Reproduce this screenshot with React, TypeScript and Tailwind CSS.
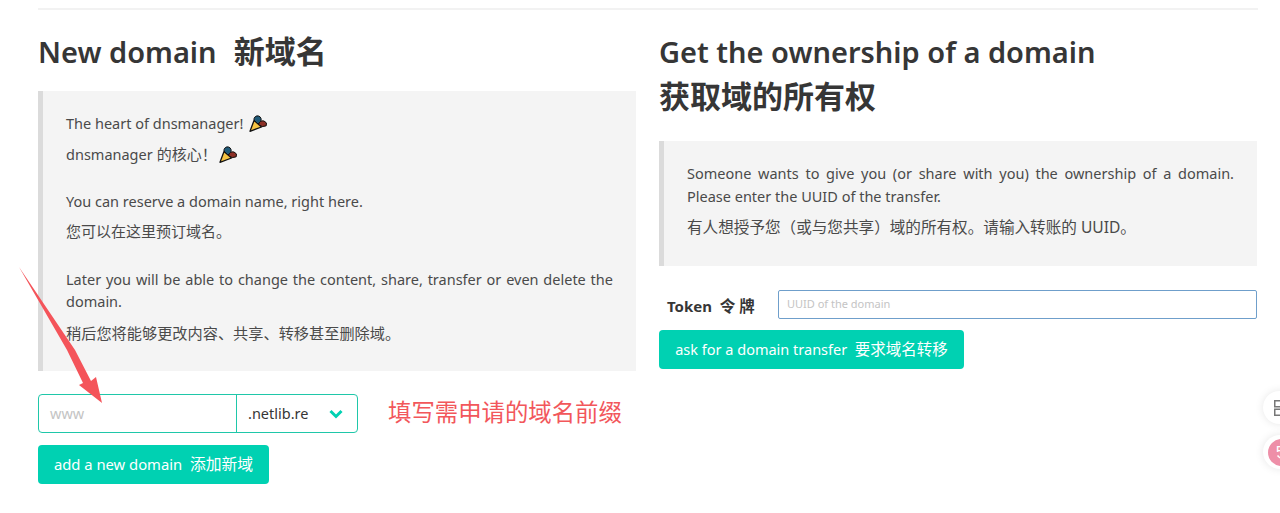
import React from 'react';

const font = { fontFamily: '"Noto Sans", "Noto Sans CJK SC", sans-serif' };

// small party popper, the emoji in the note
const Popper = ({ className }: { className?: string }) => (
  <svg viewBox="0 0 18 17" className={className} width="18" height="17">
    <path d="M1 16.3 L5 5.5 L12.5 12 Z" fill="#f6c343" stroke="#111" strokeWidth="1.3" strokeLinejoin="round" />
    <path d="M5 5 a3.6 3.6 0 1 1 6.3 1.8 L9 9 Z" fill="#1f5a78" stroke="#111" strokeWidth="1" />
    <path d="M9.5 9.5 Q11 5 15 6 Q18.8 7.5 17.2 10.8 Q13 13 9.5 9.5 Z" fill="#8c2f25" stroke="#111" strokeWidth="1" />
  </svg>
);

const Note = ({ children, className }: { children: React.ReactNode; className?: string }) => (
  <div className={`border-l-[5px] border-[#dbdbdb] bg-[#f4f4f4] text-[14.5px] leading-[22px] text-[#4a4a4a] ${className}`}>
    {children}
  </div>
);

export default function App() {
  return (
    <div className="relative h-[513px] w-[1280px] overflow-hidden bg-white pl-[38px] pr-[22px] pt-[8px]" style={font}>
      <hr className="h-[2px] border-0 bg-[#f2f2f2]" />

      <div className="mt-[20px] flex gap-[23px]">
        {/* Left column */}
        <section className="w-[598px] shrink-0">
          <h1 className="-mt-[1px] text-[29px] font-semibold leading-[44px] text-[#363636]">
            New domain&nbsp; <span className="ml-[2px] text-[31px]">新域名</span>
          </h1>
          <Note className="mt-[17px] h-[280px] pl-[23px] pr-[23px] pt-[21px]">
            <p className="flex h-[22px] items-center">
              The heart of dnsmanager!
              <Popper className="ml-[6px]" />
            </p>
            <p className="mt-[9px] flex h-[22px] items-center">
              dnsmanager <span className="ml-[4px] text-[15px]">的核心！</span>
              <Popper className="ml-[2px]" />
            </p>
            <p className="mt-[25px]">You can reserve a domain name, right here.</p>
            <p className="mt-[8px] text-[15px]">您可以在这里预订域名。</p>
            <p className="mt-[26px] text-justify">
              Later you will be able to change the content, share, transfer or even delete the domain.
            </p>
            <p className="mt-[10px] text-[15.2px]">稍后您将能够更改内容、共享、转移甚至删除域。</p>
          </Note>

          <div className="mt-[23px] flex h-[39px] w-[320px] rounded-[4px] border border-[#1fc7a9] text-[14.5px]">
            <div className="flex w-[198px] items-center border-r border-[#1fc7a9] pl-[11px] text-[#c4c4c4]">www</div>
            <div className="flex flex-1 items-center justify-between pl-[11px] pr-[14px] text-[#363636]">
              .netlib.re
              <svg viewBox="0 0 14 10" width="14" height="10" fill="none" stroke="#00d1b2" strokeWidth="3">
                <path d="M1.5 2 L7 7.5 L12.5 2" />
              </svg>
            </div>
          </div>
          <button className="mt-[12px] h-[39px] w-[231px] rounded-[4px] bg-[#00d1b2] text-[14.8px] text-white">
            add a new domain&nbsp; <span className="text-[15.8px]">添加新域</span>
          </button>
        </section>

        {/* Right column */}
        <section className="w-[598px] shrink-0">
          <h1 className="text-[29px] font-semibold leading-[44px] text-[#363636]">
            Get the ownership of a domain
            <br />
            <span className="text-[31px]">获取域的所有权</span>
          </h1>
          <Note className="mt-[22px] h-[125px] pl-[23px] pr-[23px] pt-[21px]">
            <p className="text-justify leading-[23px]">
              Someone wants to give you (or share with you) the ownership of a domain. Please enter the UUID of the transfer.
            </p>
            <p className="mt-[8px] text-[15.6px]">有人想授予您（或与您共享）域的所有权。请输入转账的 UUID。</p>
          </Note>
          <div className="mt-[24px] flex items-center">
            <label className="w-[119px] pl-[8px] pt-[5px] text-[15px] font-bold text-[#363636]">
              Token&nbsp; <span className="text-[15.5px]">令 牌</span>
            </label>
            <div className="flex h-[29px] flex-1 items-center rounded-[2px] border border-[#6f9fcb] pl-[8px] text-[11px] text-[#c4c4c4]">
              UUID of the domain
            </div>
          </div>
          <button className="mt-[11px] h-[39px] w-[305px] rounded-[4px] bg-[#00d1b2] text-[14.5px] text-white">
            ask for a domain transfer&nbsp; <span className="text-[15.5px]">要求域名转移</span>
          </button>
        </section>
      </div>

      {/* Red annotation drawn over the page */}
      <svg className="absolute left-0 top-0" width="120" height="410" viewBox="0 0 120 410">
        <path d="M19 267 L67 350 L83 383 L79 385 L102 403 L96 377 L91 381 L75 350 Z" fill="#f4545a" />
      </svg>
      <span className="absolute left-[388px] top-[394px] text-[23.4px] leading-[36px] text-[#f2575b]">填写需申请的域名前缀</span>

      {/* Floating widgets on the right edge */}
      <div className="absolute left-[1263px] top-[391px] flex h-[33px] w-[33px] items-center rounded-full bg-white pl-[11px] shadow-[0_0_8px_rgba(0,0,0,0.1)]">
        <svg viewBox="0 0 7 16" width="7" height="16" fill="none" stroke="#777" strokeWidth="1.5">
          <rect x="0.75" y="0.75" width="7" height="6" />
          <rect x="0.75" y="9.25" width="7" height="6" />
        </svg>
      </div>
      <div className="absolute left-[1263px] top-[435px] flex h-[34px] w-[34px] items-center rounded-full bg-white pl-[5px] shadow-[0_0_8px_rgba(0,0,0,0.1)]">
        <div className="flex h-[27px] w-[27px] flex-col items-center justify-center rounded-full bg-[#ee8fa8] text-[11px] font-bold leading-[11px] text-white">
          中
          <svg viewBox="0 0 12 5" width="12" height="5" fill="none" stroke="#fff" strokeWidth="1.4">
            <path d="M1.5 0.5 Q6 6 10.5 0.5" />
          </svg>
        </div>
      </div>
    </div>
  );
}
